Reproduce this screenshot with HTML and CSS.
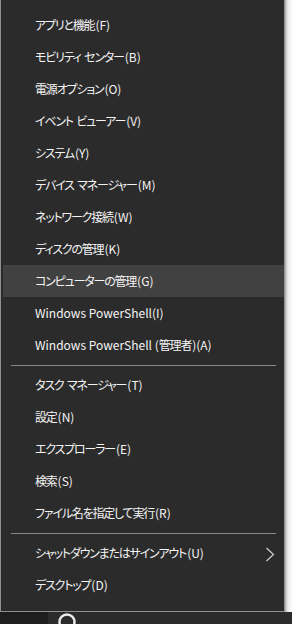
FILE: index.html
```html
<!DOCTYPE html>
<html lang="ja">
<head>
<meta charset="utf-8">
<title>Win+X メニュー</title>
<link rel="stylesheet" href="styles.css">
</head>
<body>
<div class="screen">
  <div class="top">
    <nav class="menu">
      <div class="item"><span class="ja">アプリと機能</span>(F)</div>
      <div class="item"><span class="ja">モビリティ センター</span>(B)</div>
      <div class="item"><span class="ja">電源オプション</span>(O)</div>
      <div class="item"><span class="ja">イベント ビューアー</span>(V)</div>
      <div class="item"><span class="ja">システム</span>(Y)</div>
      <div class="item"><span class="ja">デバイス マネージャー</span>(M)</div>
      <div class="item"><span class="ja">ネットワーク接続</span>(W)</div>
      <div class="item"><span class="ja">ディスクの管理</span>(K)</div>
      <div class="item active"><span class="ja">コンピューターの管理</span>(G)</div>
      <div class="item">Windows PowerShell(I)</div>
      <div class="item">Windows PowerShell (<span class="ja">管理者</span>)(A)</div>
      <div class="sep"></div>
      <div class="item"><span class="ja">タスク マネージャー</span>(T)</div>
      <div class="item"><span class="ja">設定</span>(N)</div>
      <div class="item"><span class="ja">エクスプローラー</span>(E)</div>
      <div class="item"><span class="ja">検索</span>(S)</div>
      <div class="item"><span class="ja">ファイル名を指定して実行</span>(R)</div>
      <div class="sep"></div>
      <div class="item sub"><span class="label"><span class="ja">シャットダウンまたはサインアウト</span>(U)</span>
        <svg class="chev" width="11" height="15" viewBox="0 0 11 15"><path d="M1.5 1 L8.5 7.5 L1.5 14" fill="none" stroke="#cfcfcf" stroke-width="1.2"/></svg>
      </div>
      <div class="item"><span class="ja">デスクトップ</span>(D)</div>
    </nav>
    <div class="backdrop"></div>
  </div>
  <div class="taskbar">
    <div class="start"></div>
    <div class="search">
      <svg class="ring" width="20" height="12" viewBox="0 0 20 12"><circle cx="10" cy="10" r="7.5" fill="none" stroke="#ededed" stroke-width="2.4"/></svg>
    </div>
  </div>
</div>
</body>
</html>
```
FILE: styles.css
```css
html, body {
  margin: 0;
  padding: 0;
  background: #2a2a2a;
}
.screen {
  width: 292px;
  height: 624px;
  display: flex;
  flex-direction: column;
  overflow: hidden;
}
.top {
  display: flex;
  height: 612px;
}
.menu {
  width: 283px;
  background: #2b2b2b;
  border: 1px solid #8f8f8f;
  border-top: none;
  padding: 9px 0 10px;
  box-sizing: content-box;
  height: 592px;
  display: flex;
  flex-direction: column;
  font-family: "Noto Sans CJK JP", "Noto Sans", sans-serif;
  font-feature-settings: "palt";
  font-size: 12px;
  color: #f4f4f4;
}
.item {
  height: 32px;
  margin-left: 2px;
  padding-left: 32px;
  padding-right: 8px;
  display: flex;
  align-items: center;
  white-space: nowrap;
  line-height: 1;
}
.item.sub {
  justify-content: space-between;
}
.ja {
  letter-spacing: -1.2px;
  word-spacing: 2px;
  margin-right: 1px;
}
.item.active {
  background: #414141;
}
.sep {
  height: 1px;
  margin: 4px 8px 3px 10px;
  background: #8a8a8a;
}
.chev {
  display: block;
  margin-top: 2px;
}
.backdrop {
  flex: 1;
  background: linear-gradient(to right, #a9a9a9 0, #dcdcdc 2px, #f3f3f3 4px, #f6f6f6 100%);
}
.taskbar {
  height: 12px;
  display: flex;
}
.start {
  width: 48px;
  background: #1e1e1e;
}
.search {
  flex: 1;
  background: #2b2b2b;
  padding-left: 9px;
}
.ring {
  display: block;
}
```
